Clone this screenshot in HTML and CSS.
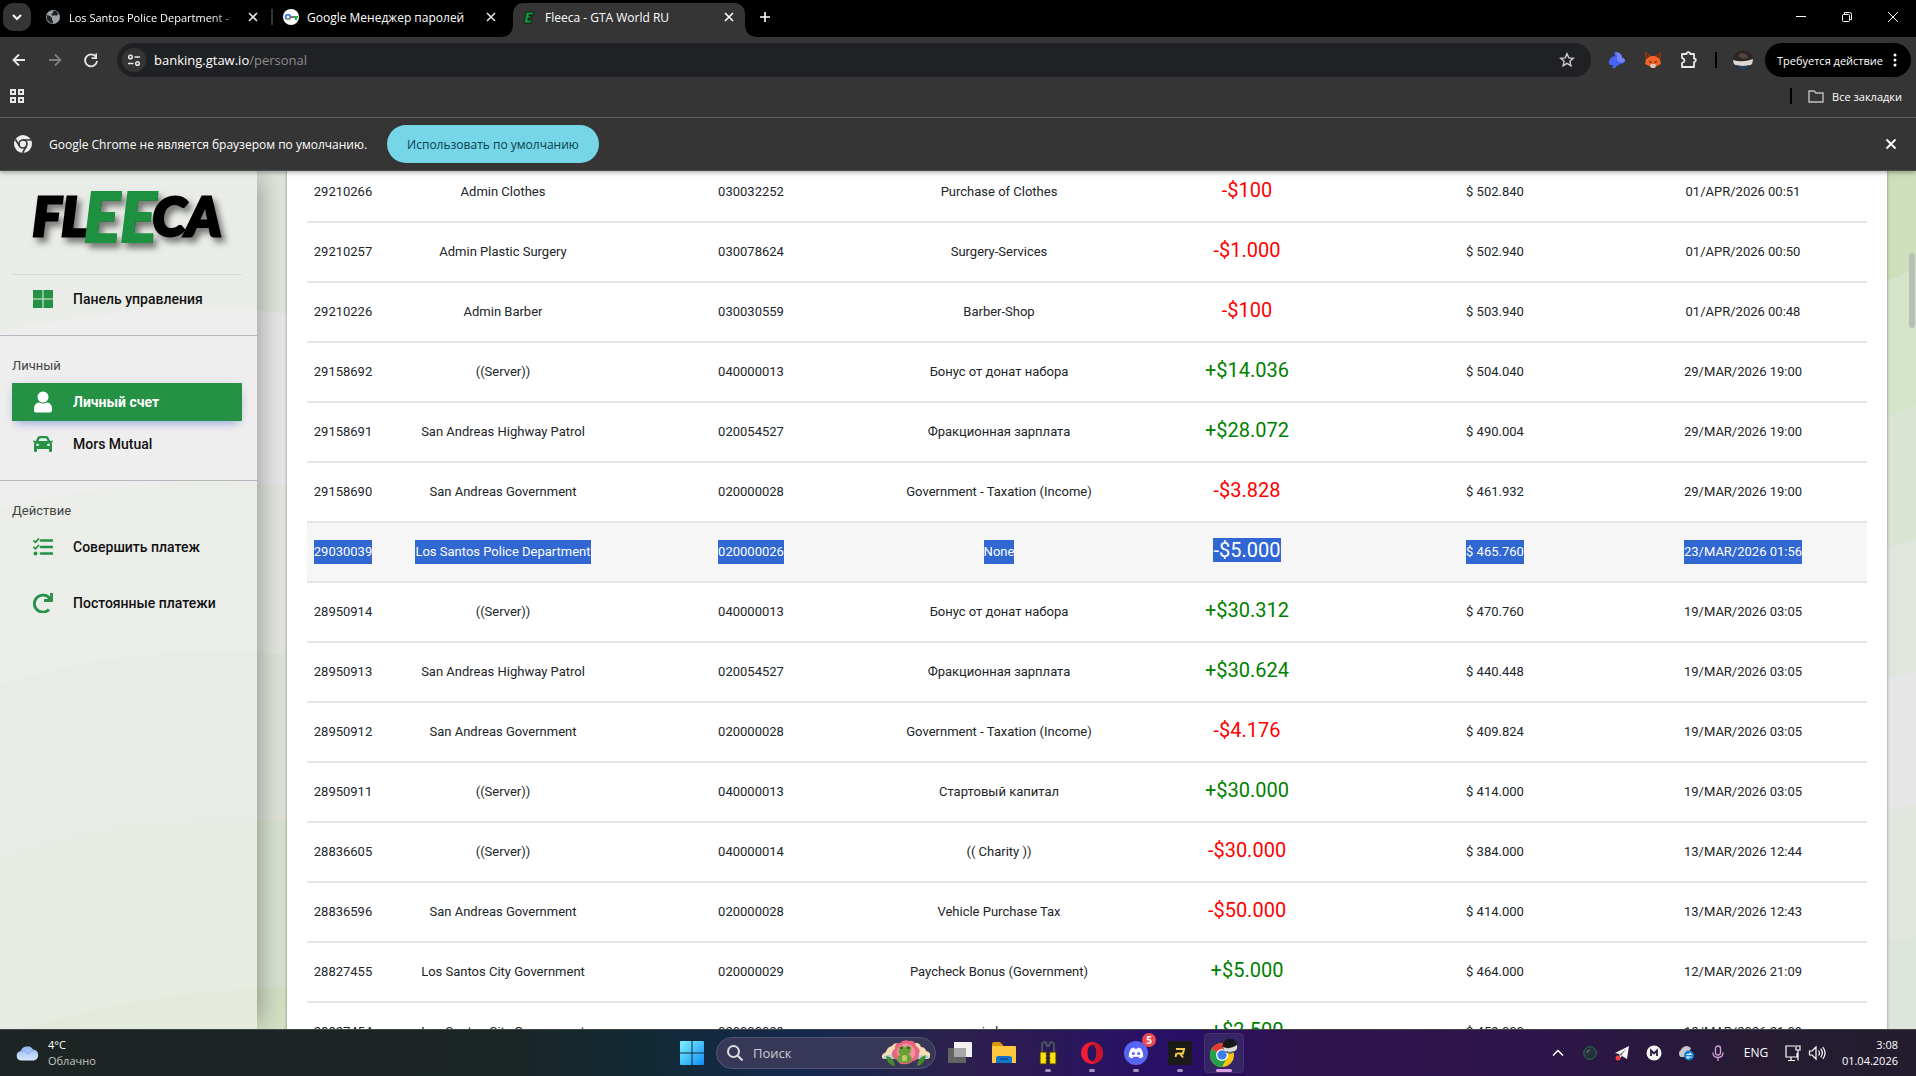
FILE: index.html
```html
<!DOCTYPE html>
<html lang="ru">
<head>
    <meta charset="UTF-8">
    <meta name="viewport" content="width=device-width, initial-scale=1.0">
    <title>Fleeca - GTA World RU</title>
    <link rel="stylesheet" href="styles.css">
</head>
<body>
    <header class="browser">
        <div class="tabstrip">
            <button class="tabsearch" aria-label="Поиск вкладок"><svg width="16" height="16" viewBox="0 0 16 16"><path d="M4 6l4 4 4-4" fill="none" stroke="#fff" stroke-width="2"/></svg></button>
            <div class="tab">
                <svg width="16" height="16" viewBox="0 0 16 16"><circle cx="8" cy="8" r="7" fill="#9aa0a6"/><path d="M2 6l3 1 2 2v2l1 1v2.500l-3-1-3-3zM8 2l3 0 2.500 3-2.500 2-1-1-2 1-2-2 2-1z" fill="#202124"/></svg>
                <span class="tabname fade">Los Santos Police Department -</span>
                <button class="close" aria-label="Закрыть"><svg width="16" height="16" viewBox="0 0 16 16"><path d="M4 4l8 8M12 4l-8 8" stroke="#e3e3e3" stroke-width="1.600"/></svg></button>
            </div>
            <i class="tabline"></i>
            <div class="tab">
                <svg width="16" height="16" viewBox="0 0 16 16"><circle cx="8" cy="8" r="8" fill="#fff"/><circle cx="5" cy="8" r="2.300" fill="none" stroke="#4285f4" stroke-width="2"/><path d="M8 7h3v2H8z" fill="#ea4335"/><path d="M10 7h5v2h-1v2h-2V9h-2z" fill="#34a853"/><path d="M3 10l2 1 2-1" stroke="#fbbc04" fill="none"/></svg>
                <span class="tabname">Google Менеджер паролей</span>
                <button class="close" aria-label="Закрыть"><svg width="16" height="16" viewBox="0 0 16 16"><path d="M4 4l8 8M12 4l-8 8" stroke="#e3e3e3" stroke-width="1.600"/></svg></button>
            </div>
            <i class="tabline hidden"></i>
            <div class="tab active">
                <svg width="16" height="16" viewBox="0 0 16 16"><path d="M5 3h8l-1 3H8v1h3l-1 2H7v2h4l-1 3H3z" fill="#1b9140" stroke="#06280f"/></svg>
                <span class="tabname">Fleeca - GTA World RU</span>
                <button class="close" aria-label="Закрыть"><svg width="16" height="16" viewBox="0 0 16 16"><path d="M4 4l8 8M12 4l-8 8" stroke="#fff" stroke-width="1.600"/></svg></button>
            </div>
            <button class="newtab" aria-label="Новая вкладка"><svg width="16" height="16" viewBox="0 0 16 16"><path d="M8 3v10M3 8h10" stroke="#fff" stroke-width="1.600"/></svg></button>
            <div class="winbuttons">
                <button aria-label="Свернуть"><svg width="12" height="12" viewBox="0 0 12 12"><path d="M1 5.500h10" stroke="#fff"/></svg></button>
                <button aria-label="Окно"><svg width="12" height="12" viewBox="0 0 12 12"><path d="M3.500 3V1.500h5q2 0 2 2v5H9" fill="none" stroke="#fff"/><rect x="1.500" y="3.500" width="7" height="7" rx="1" fill="none" stroke="#fff"/></svg></button>
                <button aria-label="Закрыть окно"><svg width="12" height="12" viewBox="0 0 12 12"><path d="M1 1l10 10M11 1L1 11" stroke="#fff"/></svg></button>
            </div>
        </div>
        <div class="toolbar">
            <button class="nav" aria-label="Назад"><svg width="18" height="18" viewBox="0 0 18 18"><path d="M15 9H4M9 3.500L3.500 9 9 14.500" fill="none" stroke="#e8e8e8" stroke-width="1.800"/></svg></button>
            <button class="nav" aria-label="Вперед"><svg width="18" height="18" viewBox="0 0 18 18"><path d="M3 9h11M9 3.500L14.500 9 9 14.500" fill="none" stroke="#7d7d7d" stroke-width="1.800"/></svg></button>
            <button class="nav" aria-label="Обновить"><svg width="18" height="18" viewBox="0 0 18 18"><path d="M14 6a6 6 0 1 0 1 4" fill="none" stroke="#e8e8e8" stroke-width="1.800"/><path d="M15 2.500V8H9.500V6.300h3.800V2.500z" fill="#e8e8e8"/></svg></button>
            <div class="address">
                <button class="siteinfo" aria-label="О сайте"><svg width="14" height="14" viewBox="0 0 14 14" fill="none" stroke="#e8e8e8" stroke-width="1.500"><circle cx="3.500" cy="4" r="1.800"/><path d="M7.500 4H13M1 10.500h5.500"/><circle cx="10.500" cy="10.500" r="1.800"/></svg></button>
                <a class="url" href="#">banking.gtaw.io<span>/personal</span></a>
                <button class="star" aria-label="Закладка"><svg width="16" height="16" viewBox="0 0 16 16"><path d="M8 1.800l1.800 4.100 4.500.4-3.400 3 1 4.400L8 11.400l-3.900 2.300 1-4.400-3.400-3 4.500-.4z" fill="none" stroke="#ccc" stroke-width="1.400"/></svg></button>
            </div>
            <div class="extensions">
                <button aria-label="Кошелек"><svg width="18" height="18" viewBox="0 0 18 18"><path d="M1 10q1-4 6-5 0-1-1-3Q7 0 11 2q3 2 3 5 3 0 3 3-1 3-5 3l-1 1q-2 0-4 3l-3 0q1-2 2-3-3 1-5-1z" fill="#4b63f5"/><path d="M8 1q6 1 6 6 3 0 3 3-2 2-5 1-4-1-3-6z" fill="#7387fb"/></svg></button>
                <button aria-label="MetaMask"><svg width="18" height="18" viewBox="0 0 18 18"><path d="M1 1l6 4h4l6-4-1 7 1 5-4 2-2 1H7l-2-1-4-2 1-5z" fill="#f0642a"/><path d="M1 1l6 4-5 3zM17 1l-6 4 5 3z" fill="#7d2a10"/><path d="M5 10l3 1-2 1zM13 10l-3 1 2 1z" fill="#331d12"/><path d="M6 14l1-1h4l1 1-1 3H7z" fill="#d8c5b8"/></svg></button>
                <button aria-label="Расширения"><svg width="18" height="18" viewBox="0 0 18 18"><path d="M2 3h4.500a1.800 1.800 0 0 1 3.600 0H14v4.500a1.800 1.800 0 0 1 0 3.600V16H2v-4q2.500-1 2.500-2.600T2 7z" fill="none" stroke="#e8e8e8" stroke-width="1.800" stroke-linejoin="round"/></svg></button>
            </div>
            <i class="sep"></i>
            <button class="avatar" aria-label="Профиль"><svg width="20" height="20" viewBox="0 0 20 20"><circle cx="10" cy="10" r="10" fill="#2d2524"/><path d="M0 10q10 3 20-1 0 4-2 6-8 2-16 0-2-2-2-5z" fill="#ded9d5"/><path d="M3 15q7 2 14 0-3 5-7 5t-7-5z" fill="#27405c"/><path d="M5 6l3-3 5 1 3 4-6 1z" fill="#54443e"/></svg></button>
            <button class="action">Требуется действие <svg width="4" height="14" viewBox="0 0 4 14" fill="#fff"><circle cx="2" cy="2" r="1.500"/><circle cx="2" cy="7" r="1.500"/><circle cx="2" cy="12" r="1.500"/></svg></button>
        </div>
        <div class="bookmarks">
            <button class="apps" aria-label="Приложения"><svg width="14" height="14" viewBox="0 0 14 14" fill="none" stroke="#e8e8e8" stroke-width="2"><path d="M1 1h4v4H1zM9 1h4v4H9zM1 9h4v4H1zM9 9h4v4H9z"/></svg></button>
            <i class="sep"></i>
            <button class="allmarks"><svg width="16" height="13" viewBox="0 0 16 13"><path d="M1 1h5l2 2h7v9H1z" fill="none" stroke="#c0c0c0" stroke-width="1.400"/></svg>Все закладки</button>
        </div>
        <div class="infobar">
            <svg width="18" height="18" viewBox="0 0 18 18"><circle cx="9" cy="9" r="9" fill="#eee"/><circle cx="9" cy="9" r="4" fill="#eee" stroke="#353535" stroke-width="1.600"/><path d="M9 5h8M5.500 11L1.500 4.500M12.500 11L8.500 18" stroke="#353535" stroke-width="1.600"/></svg>
            <p>Google Chrome не является браузером по умолчанию.</p>
            <button class="default">Использовать по умолчанию</button>
            <button class="close" aria-label="Закрыть"><svg width="16" height="16" viewBox="0 0 16 16"><path d="M3.500 3.500l9 9M12.500 3.500l-9 9" stroke="#fff" stroke-width="1.800"/></svg></button>
        </div>
    </header>

    <main class="page">
        <svg class="backdrop" viewBox="0 0 1916 858" preserveAspectRatio="none">
            <rect width="1916" height="858" fill="#dee4d8"/>
            <path d="M0 162Q100 137 200 137T400 165V858H0z" fill="#e6e6e6"/>
            <path d="M0 338Q110 310 210 311T400 335V858H0z" fill="#e1e5dd"/>
            <path d="M0 513Q100 482 200 481T400 497V858H0z" fill="#dce2d6"/>
            <path d="M0 688Q100 651 210 650H400V858H0z" fill="#d6e2cf"/>
            <path d="M20 858Q150 820 287 816H400V858z" fill="#d2dfc3"/>
            <path d="M1000 0H1916V858H1000z" fill="#cde0bb"/>
            <path d="M1887 110L1916 97V858H1860V122z" fill="#d4e4c8"/>
            <path d="M1887 246L1916 234V858H1860V257z" fill="#dae4d2"/>
            <path d="M1887 377L1916 368V858H1860V386z" fill="#e0e6dc"/>
            <path d="M1887 509L1916 500V858H1860V518z" fill="#e6e6e6"/>
            <path d="M1887 640L1916 633V858H1860V647z" fill="#e1e6df"/>
            <path d="M1887 772L1916 765V858H1860V779z" fill="#dde5da"/>
        </svg>
        <nav class="sidebar">
            <a class="logo" href="#"><span class="dark">FL</span><span class="green">EE</span><span class="dark">CA</span></a>
            <ul>
                <li><a href="#"><svg width="20" height="18" viewBox="0 0 20 18"><path d="M0 0h9.500v8.500H0zM10.500 0H20v8.500h-9.500zM0 9.500h9.500V18H0zM10.500 9.500H20V18h-9.500z" fill="#259145"/></svg>Панель управления</a></li>
            </ul>
            <h2>Личный</h2>
            <ul>
                <li class="current"><a href="#"><svg width="20" height="22" viewBox="0 0 20 22" fill="#fff"><circle cx="10" cy="6" r="5.500"/><path d="M1 18q0-6 5-6.500 4 2 8 0 5 .5 5 6.500v1.500q0 2-2 2H3q-2 0-2-2z"/></svg>Личный счет</a></li>
                <li><a href="#"><svg width="20" height="16" viewBox="0 0 20 16"><path fill="#259145" fill-rule="evenodd" d="M3 5l1.200-3Q5 0 7 0h6q2 0 2.800 2L17 5l2.500-.5q.7.500.3 1.200l-1.300.8q.5.700.5 1.500v7q0 1-1 1h-1q-1 0-1-1v-2H4v2q0 1-1 1H2q-1 0-1-1V8q0-.8.500-1.500L.2 5.700q-.4-.7.300-1.200zM5.500 5h9l-1-2.300q-.2-.5-.7-.5H7.200q-.5 0-.7.500zM4.500 7.500a1.500 1.300 0 1 0 .1 0zM15.500 7.500a1.500 1.300 0 1 0 .1 0z"/></svg>Mors Mutual</a></li>
            </ul>
            <h2>Действие</h2>
            <ul class="wide">
                <li><a href="#"><svg width="20" height="18" viewBox="0 0 20 18" fill="none" stroke="#259145"><path d="M8 2.500h11M8 9h11M8 15.500h11" stroke-width="2.600" stroke-linecap="round"/><path d="M.5 2.500L2.500 4.300 6 .5M.5 9l2 1.800L6 7" stroke-width="1.800"/><circle cx="2.500" cy="15.500" r="2" fill="#259145" stroke="none"/></svg>Совершить платеж</a></li>
                <li><a href="#"><svg width="20" height="20" viewBox="0 0 20 20"><path d="M16 16.500A8.500 8.500 0 1 1 17 6" fill="none" stroke="#259145" stroke-width="2.800"/><path d="M18.500 0v7.500H11" fill="none" stroke="#259145" stroke-width="2.800"/></svg>Постоянные платежи</a></li>
            </ul>
        </nav>
        <section class="card">
            <table>
                <tbody>
                    <tr><td class="id">29210266</td><td>Admin Clothes</td><td>030032252</td><td>Purchase of Clothes</td><td class="sum minus">-$100</td><td>$ 502.840</td><td>01/APR/2026 00:51</td></tr>
                    <tr><td>29210257</td><td>Admin Plastic Surgery</td><td>030078624</td><td>Surgery-Services</td><td class="sum minus">-$1.000</td><td>$ 502.940</td><td>01/APR/2026 00:50</td></tr>
                    <tr><td>29210226</td><td>Admin Barber</td><td>030030559</td><td>Barber-Shop</td><td class="sum minus">-$100</td><td>$ 503.940</td><td>01/APR/2026 00:48</td></tr>
                    <tr><td>29158692</td><td>((Server))</td><td>040000013</td><td>Бонус от донат набора</td><td class="sum plus">+$14.036</td><td>$ 504.040</td><td>29/MAR/2026 19:00</td></tr>
                    <tr><td>29158691</td><td>San Andreas Highway Patrol</td><td>020054527</td><td>Фракционная зарплата</td><td class="sum plus">+$28.072</td><td>$ 490.004</td><td>29/MAR/2026 19:00</td></tr>
                    <tr><td>29158690</td><td>San Andreas Government</td><td>020000028</td><td>Government - Taxation (Income)</td><td class="sum minus">-$3.828</td><td>$ 461.932</td><td>29/MAR/2026 19:00</td></tr>
                    <tr class="selected"><td><span>29030039</span></td><td><span>Los Santos Police Department</span></td><td><span>020000026</span></td><td><span>None</span></td><td class="sum minus"><span>-$5.000</span></td><td><span>$ 465.760</span></td><td><span>23/MAR/2026 01:56</span></td></tr>
                    <tr><td>28950914</td><td>((Server))</td><td>040000013</td><td>Бонус от донат набора</td><td class="sum plus">+$30.312</td><td>$ 470.760</td><td>19/MAR/2026 03:05</td></tr>
                    <tr><td>28950913</td><td>San Andreas Highway Patrol</td><td>020054527</td><td>Фракционная зарплата</td><td class="sum plus">+$30.624</td><td>$ 440.448</td><td>19/MAR/2026 03:05</td></tr>
                    <tr><td>28950912</td><td>San Andreas Government</td><td>020000028</td><td>Government - Taxation (Income)</td><td class="sum minus">-$4.176</td><td>$ 409.824</td><td>19/MAR/2026 03:05</td></tr>
                    <tr><td>28950911</td><td>((Server))</td><td>040000013</td><td>Стартовый капитал</td><td class="sum plus">+$30.000</td><td>$ 414.000</td><td>19/MAR/2026 03:05</td></tr>
                    <tr><td>28836605</td><td>((Server))</td><td>040000014</td><td>(( Charity ))</td><td class="sum minus">-$30.000</td><td>$ 384.000</td><td>13/MAR/2026 12:44</td></tr>
                    <tr><td>28836596</td><td>San Andreas Government</td><td>020000028</td><td>Vehicle Purchase Tax</td><td class="sum minus">-$50.000</td><td>$ 414.000</td><td>13/MAR/2026 12:43</td></tr>
                    <tr><td>28827455</td><td>Los Santos City Government</td><td>020000029</td><td>Paycheck Bonus (Government)</td><td class="sum plus">+$5.000</td><td>$ 464.000</td><td>12/MAR/2026 21:09</td></tr>
                    <tr><td>28827454</td><td>Los Santos City Government</td><td>020000029</td><td>in bus</td><td class="sum plus">+$2.500</td><td>$ 459.000</td><td>12/MAR/2026 21:09</td></tr>
                </tbody>
            </table>
        </section>
        <i class="scrollbar"></i>
    </main>

    <footer class="taskbar">
        <button class="weather">
            <svg width="24" height="16" viewBox="0 0 24 16"><defs><linearGradient id="cloud" x1="0" y1="0" x2="0" y2="1"><stop offset="0" stop-color="#8fb4f0"/><stop offset="1" stop-color="#d9e5fb"/></linearGradient></defs><path d="M5 15.500a4.700 4.700 0 0 1-.5-9.300A7 7 0 0 1 17 4.500a5.600 5.600 0 0 1 1 11z" fill="url(#cloud)"/><path d="M5 6q5-1 7 3 2-4 6-4" fill="none" stroke="#7fa5e8"/></svg>
            <span>4°C<br><em>Облачно</em></span>
        </button>
        <div class="dock">
            <button aria-label="Пуск"><svg width="24" height="24" viewBox="0 0 24 24"><defs><linearGradient id="win" x1="0" y1="0" x2="1" y2="1"><stop offset="0" stop-color="#7ff3fd"/><stop offset="1" stop-color="#0d8df5"/></linearGradient></defs><path d="M0 1q0-1 1-1h10.500v11.500H0zM12.500 0H23q1 0 1 1v10.500H12.500zM0 12.500h11.500V24H1q-1 0-1-1zM12.500 12.500H24V23q0 1-1 1H12.500z" fill="url(#win)"/></svg></button>
            <label class="search">
                <svg width="16" height="16" viewBox="0 0 16 16"><circle cx="6.500" cy="6.500" r="5.500" fill="none" stroke="#ddd" stroke-width="2"/><path d="M10.500 10.500l5 5" stroke="#ddd" stroke-width="2"/></svg>
                <input type="text" placeholder="Поиск" aria-label="Поиск">
                <svg width="50" height="26" viewBox="0 0 50 26"><path d="M1 18q-1-4 4-6 1-5 6-6 2-4 7-2l14 0q6-3 8 3 4 0 5 4 5 1 4 5 0 3-3 3H3z" fill="#f3ddb5"/><path d="M3 16q8-3 14 0 10-3 30 0v3H3z" fill="#a9d6d5"/><path d="M14 9q-1-6 5-6 4-4 9-2 6-1 7 5 5 3 3 8 0 6-6 7-4 4-8 3-6 1-8-4-5-2-5-6 0-4 3-5z" fill="#e8657f"/><path d="M17 8q8-9 16 0 3 6-1 10-7 6-13 0-5-5-2-10z" fill="#f58fa1"/><path d="M18 9q0-3 3-3 2 0 3 2 2-3 4-2 3 1 2 4 0 3-3 4 5 2 3 7-2 3-4 1-3 2-6 0-3 1-4-2 0-3 3-5-2-2-1-6z" fill="#6b9f35"/><path d="M21 16q3-2 5 0v5h-5z" fill="#b7cc63"/><circle cx="20.500" cy="8" r="1" fill="#263b12"/><circle cx="27.500" cy="8" r="1" fill="#263b12"/><path d="M5 16q8 1 9 10-8-1-9-10zM45 15q-8 2-9 11 8-2 9-11z" fill="#4b8a2c"/></svg>
            </label>
            <button aria-label="Рабочие столы"><svg width="24" height="24" viewBox="0 0 24 24"><path d="M6 1h17q1 0 1 1v14H6z" fill="#f2f2f2"/><path d="M0 7h18v15H1q-1 0-1-1z" fill="#636363"/><path d="M6 7h12v9H6z" fill="#a7a7a7"/></svg></button>
            <button aria-label="Проводник"><svg width="24" height="24" viewBox="0 0 24 24"><path d="M0 3q0-2 2-2h6l3 3v5H0z" fill="#d9960a"/><path d="M1 5h22q1 0 1 1v16H0V6z" fill="#fbc840"/><path d="M4 22v-5q0-2 2-2h11q3 0 3 2v5z" fill="#1276c8"/><path d="M8 18h8" stroke="#064f8f" stroke-width="1.500"/></svg></button>
            <button class="running" aria-label="Замки"><svg width="24" height="24" viewBox="0 0 24 24"><path d="M6 12V5q0-4 3-4 2 1 2 5M13 6q0-4 2-5 3 0 3 4v7" fill="none" stroke="#49525a" stroke-width="2"/><path d="M4 11h7l-1 2 1 2-1 2 1 2-1 2 1 2H4zM20 11h-7l1 2-1 2 1 2-1 2 1 2-1 2h7z" fill="#ffe00f" stroke="#403600"/></svg></button>
            <button class="running" aria-label="Opera"><svg width="24" height="24" viewBox="0 0 24 24"><path d="M12 1a11 11 0 1 0 .1 0zM12 3.500q4.500 1 4.500 8.500T12 20.500Q7.500 19.500 7.500 12T12 3.500z" fill="#f31c31" fill-rule="evenodd"/><path d="M12 3.500Q15 .5 19 3.600a11 11 0 0 1 0 16.800Q15 23.500 12 20.500q4.500-1 4.500-8.500T12 3.500z" fill="#c4172b"/></svg></button>
            <button class="running discord" aria-label="Discord"><svg width="24" height="24" viewBox="0 0 24 24"><circle cx="12" cy="12" r="12" fill="#5865f2"/><path d="M7 7.500l3-1 .7 1.200h2.600l.7-1.200 3 1q2.500 4 2.200 8.500l-3.500 1.600-1-1.800H9.300l-1 1.800L4.800 16Q4.500 11.500 7 7.500z" fill="#fff"/><circle cx="9.400" cy="12.500" r="1.500" fill="#5865f2"/><circle cx="14.600" cy="12.500" r="1.500" fill="#5865f2"/></svg><b>5</b></button>
            <button class="running" aria-label="RAGE"><svg width="24" height="24" viewBox="0 0 24 24"><path d="M0 0h24v24H0z" fill="#1a1a19"/><path d="M8 8h8l-1 4.500H9M12 12.500l3 4M8.500 12l-1 4" fill="none" stroke="#f6c64f" stroke-width="2"/></svg></button>
            <button class="running front" aria-label="Chrome"><svg width="28" height="28" viewBox="0 0 28 28"><circle cx="12" cy="16" r="12" fill="#fbc417"/><path d="M12 16L1.600 10a12 12 0 0 1 20.800 0H12z" fill="#e33b2e"/><path d="M1.600 10A12 12 0 0 0 12 28l5-9-5-3z" fill="#25a04a"/><circle cx="12" cy="16" r="6" fill="#fff"/><circle cx="12" cy="16" r="4.700" fill="#3b7ded"/><circle cx="20" cy="7" r="7.500" fill="#17191c"/><path d="M13 8q7 3 14-2 1 4-2 6-7 2-11 0z" fill="#dadada"/><path d="M16 12q5 2 9 0-2 3-5 2.500t-4-2.500z" fill="#5a7485"/></svg></button>
        </div>
        <div class="tray">
            <button aria-label="Скрытые значки"><svg width="12" height="12" viewBox="0 0 12 12"><path d="M1 8.500l5-5 5 5" fill="none" stroke="#fff" stroke-width="1.500"/></svg></button>
            <button aria-label="Статус"><svg width="14" height="14" viewBox="0 0 14 14"><circle cx="7" cy="7" r="6.300" fill="#26303b" stroke="#1e7a4d"/><path d="M4 7q0-3 3-3" fill="none" stroke="#75808a"/></svg></button>
            <button aria-label="Telegram"><svg width="16" height="16" viewBox="0 0 16 16"><path d="M1 8L15 1l-2 13-5-3-2 2-1-4z" fill="#f6f6f6"/><path d="M5 10l7-6-5 7z" fill="#80758e"/><circle cx="4" cy="13" r="2.500" fill="#f0413b"/></svg></button>
            <button aria-label="M"><svg width="16" height="16" viewBox="0 0 16 16"><circle cx="8" cy="8" r="7.500" fill="#f5f5f5"/><path d="M5 11V5.500l3 3 3-3V11" fill="none" stroke="#2b1b40" stroke-width="1.800"/></svg></button>
            <button aria-label="OneDrive"><svg width="18" height="16" viewBox="0 0 18 16"><path d="M4 12a4 4 0 0 1 0-7 6 6 0 0 1 10-2l-4 9z" fill="#c9c6cc"/><circle cx="12" cy="10.500" r="5" fill="#1180dc"/><path d="M9.500 9.500h4.500l-1.500-1.500M14.500 12H10l1.500 1.500" fill="none" stroke="#fff" stroke-width="1.200"/></svg></button>
            <button aria-label="Микрофон"><svg width="14" height="16" viewBox="0 0 14 16"><rect x="4.500" y="1" width="5" height="9" rx="2.500" fill="none" stroke="#d3a0da" stroke-width="1.300"/><path d="M2 7.500q0 5 5 5t5-5M7 12.500V16" fill="none" stroke="#d3a0da" stroke-width="1.300"/></svg></button>
            <button class="lang">ENG</button>
            <button class="sound" aria-label="Сеть и звук">
                <svg width="18" height="18" viewBox="0 0 18 18" fill="none" stroke="#fff" stroke-width="1.200"><path d="M11 2H2v11h11V9M7 13v3M4 16.500h7M12 2h4v4h-4zM14 6v10.500"/></svg>
                <svg width="18" height="16" viewBox="0 0 18 16" fill="none" stroke="#fff" stroke-width="1.200"><path d="M1.500 6h2.500l4-4v12l-4-4H1.500zM10.500 5.500q2 2.500 0 5M12.700 3.700q3.300 4.300 0 8.600M14.800 2q4.600 6 0 12"/></svg>
            </button>
            <time>3:08<br>01.04.2026</time>
        </div>
    </footer>
</body>
</html>
```
FILE: styles.css
```css
*{
    box-sizing: border-box;
}
body{
    margin: 0;
    height: 100vh;
    display: flex;
    flex-direction: column;
    overflow: hidden;
    font-family: "Roboto", sans-serif;
    color: #212529;
}
button{
    border: 0;
    padding: 0;
    background: transparent;
    font: inherit;
    color: inherit;
    display: flex;
    align-items: center;
    justify-content: center;
}
a{
    color: inherit;
    text-decoration: none;
}
svg{
    display: block;
    flex-shrink: 0;
}

/* browser */
.browser{
    position: relative;
    z-index: 2;
    background: #353535;
    color: #fff;
    font-family: "Open Sans", sans-serif;
    font-size: 12px;
    border-bottom: 1px solid #47504c;
    box-shadow: 0 1px 5px rgba(0,0,0,0.4);
}
.tabstrip{
    display: flex;
    height: 37px;
    padding: 3px 0 0 3px;
    background: #000;
}
.tabsearch{
    width: 28px;
    height: 28px;
    margin-right: 6px;
    border-radius: 10px;
    background: #353535;
}
.tab{
    display: flex;
    align-items: center;
    gap: 8px;
    width: 232px;
    padding: 0 8px 6px;
}
.tab.active{
    position: relative;
    height: 34px;
    border-radius: 10px 10px 0 0;
    background: #353535;
}
.tab.active::before,.tab.active::after{
    content: "";
    position: absolute;
    bottom: 0;
    width: 10px;
    height: 10px;
}
.tab.active::before{
    left: -10px;
    background: radial-gradient(circle at 0 0, #000 9px, #353535 10px);
}
.tab.active::after{
    right: -10px;
    background: radial-gradient(circle at 100% 0, #000 9px, #353535 10px);
}
.tabname{
    flex: 1;
    white-space: nowrap;
}
.tab .close{
    flex-shrink: 0;
}
.fade{
    min-width: 0;
    margin-right: -6px;
    font-size: 11px;
    -webkit-mask-image: linear-gradient(90deg, #000 80%, transparent 105%);
    mask-image: linear-gradient(90deg, #000 80%, transparent 105%);
}
.tabline{
    width: 2px;
    height: 16px;
    margin: 6px 2px;
    background: #353535;
}
.hidden{
    visibility: hidden;
}
.newtab{
    width: 28px;
    height: 28px;
    margin-left: 6px;
}
.winbuttons{
    display: flex;
    height: 28px;
    margin-left: auto;
}
.winbuttons button{
    width: 46px;
}
.toolbar{
    display: flex;
    align-items: center;
    height: 46px;
    padding: 0 5px 0 1px;
}
.nav{
    width: 36px;
    height: 34px;
}
.address{
    flex: 1;
    display: flex;
    align-items: center;
    gap: 8px;
    height: 34px;
    margin-left: 8px;
    padding: 0 16px 0 5px;
    border-radius: 17px;
    background: #202124;
}
.siteinfo{
    width: 24px;
    height: 24px;
    border-radius: 50%;
    background: #353535;
}
.url{
    flex: 1;
    font-size: 13px;
}
.url span{
    color: #8d8d8d;
}
.extensions{
    display: flex;
    margin: 0 8px;
}
.extensions button{
    width: 36px;
}
.sep{
    width: 2px;
    height: 16px;
    background: #000;
}
.avatar{
    margin: 0 12px 0 16px;
}
.action{
    gap: 10px;
    height: 34px;
    padding: 0 14px 0 12px;
    border-radius: 17px;
    background: #000;
    font-size: 11px;
}
.bookmarks{
    display: flex;
    align-items: center;
    height: 34px;
    padding: 0 14px 8px 10px;
}
.apps{
    margin-right: auto;
}
.allmarks{
    gap: 8px;
    margin-left: 16px;
    font-size: 11px;
}
.infobar{
    display: flex;
    align-items: center;
    height: 53px;
    padding: 0 17px 0 14px;
    border-top: 1px solid #5e5e5e;
}
.infobar p{
    margin: 0 20px 0 17px;
}
.default{
    height: 38px;
    padding: 0 20px;
    border-radius: 19px;
    background: #76d5e6;
    color: #04424e;
}
.infobar .close{
    margin-left: auto;
}

/* bank page */
.page{
    position: relative;
    flex: 1;
    min-height: 0;
    display: flex;
    overflow: hidden;
}
.backdrop{
    position: absolute;
    inset: 0;
    width: 100%;
    height: 100%;
}
.sidebar{
    position: relative;
    width: 257px;
    flex-shrink: 0;
    background: rgba(246,246,246,0.5);
    box-shadow: 8px 0 24px -6px rgba(0,0,0,0.35);
}
.logo{
    display: flex;
    align-items: center;
    justify-content: center;
    height: 104px;
    margin: 0 15px 5px 12px;
    padding-bottom: 14px;
    border-bottom: 1px solid #d9dbd6;
    font: italic 900 54px/70px "Lato", sans-serif;
}
.logo span{
    filter: drop-shadow(4px 5px 3px rgba(0,0,0,0.5));
}
.dark{
    color: #000;
    -webkit-text-stroke: 3px #000;
}
.green{
    position: relative;
    z-index: 1;
    margin: 0 -4px;
    font-size: 68px;
    color: #1e9140;
    -webkit-text-stroke: 2px #1e9140;
    text-shadow: 1px 1px 0 #0b4f20;
}
.sidebar ul{
    list-style: none;
    margin: 0;
    padding: 0 15px 17px 12px;
    border-bottom: 1px solid #b6baba;
}
.sidebar ul:last-child{
    border: 0;
}
.sidebar li{
    margin-bottom: 4px;
}
.sidebar li:last-child{
    margin-bottom: 0;
}
.sidebar .wide li{
    margin-bottom: 18px;
}
.sidebar li a{
    display: flex;
    align-items: center;
    gap: 20px;
    height: 38px;
    padding-left: 21px;
    font-size: 14px;
    font-weight: 500;
    color: #111;
}
.sidebar .current a{
    background: #259145;
    color: #fff;
    font-weight: 700;
    box-shadow: 0 6px 10px -4px rgba(70,110,220,0.5), 0 0 12px rgba(0,0,0,0.06);
}
.sidebar h2{
    margin: 0;
    padding: 20px 12px 7px;
    font-size: 13px;
    line-height: 20px;
    font-weight: 400;
    color: #444;
}
.card{
    position: relative;
    flex: 1;
    align-self: flex-start;
    margin: -8px 29px 0 30px;
    padding: 0 20px;
    background: #fff;
    box-shadow: 0 0 3px rgba(0,0,0,0.4);
}
table{
    width: 100%;
    table-layout: fixed;
    border-spacing: 0;
}
td{
    height: 60px;
    padding: 0;
    text-align: center;
    vertical-align: middle;
    font-size: 13px;
    line-height: 24px;
    border-bottom: 2px solid #e3e4e5;
}
.id{
    width: 72px;
}
.sum{
    padding-bottom: 4px;
    font-size: 20px;
}
.minus{
    color: #f00;
}
.plus{
    color: #008000;
}
.selected{
    background: #f6f6f6;
}
.selected span{
    display: inline-block;
    background: #3067d3;
    color: #fff;
}
.scrollbar{
    position: absolute;
    top: 82px;
    right: 1px;
    width: 6px;
    height: 75px;
    border-radius: 3px;
    background: #b9beb6;
}

/* windows taskbar */
.taskbar{
    position: relative;
    display: grid;
    grid-template-columns: 1fr auto 1fr;
    align-items: center;
    height: 47px;
    border-top: 1px solid #3c4645;
    background: linear-gradient(90deg, #1d2423 0%, #1b2524 26%, #122a33 33%, #14294e 42%, #2c204c 50%, #280f68 61%, #30124e 68%, #2d154a 80%, #251c32 92%, #231c2e 100%);
    color: #fff;
    font-family: "Open Sans", sans-serif;
    font-size: 12px;
    line-height: 16px;
}
.weather{
    justify-self: start;
    gap: 8px;
    margin-left: 16px;
    text-align: left;
    font-size: 11px;
}
.weather em{
    font-style: normal;
    color: #c3c5c5;
}
.dock{
    display: flex;
    gap: 4px;
}
.dock button{
    position: relative;
    width: 40px;
    height: 40px;
    border-radius: 4px;
}
.running::after{
    content: "";
    position: absolute;
    bottom: 1px;
    left: 17px;
    width: 6px;
    height: 3px;
    border-radius: 2px;
    background: #a394b9;
}
.dock .front{
    border: 1px solid #45326e;
    background: #362566;
}
.front::after{
    bottom: 0;
    left: 11px;
    width: 16px;
    background: #dda0e4;
}
.discord b{
    position: absolute;
    top: 0;
    right: 0;
    width: 14px;
    height: 14px;
    border-radius: 50%;
    background: #ec4a50;
    font-size: 10px;
    line-height: 14px;
}
.search{
    display: flex;
    align-items: center;
    gap: 8px;
    width: 220px;
    height: 32px;
    margin-top: 4px;
    padding: 0 4px 0 10px;
    border: 1px solid #535476;
    border-radius: 16px;
    background: #373858;
}
.search input{
    flex: 1;
    min-width: 0;
    border: 0;
    background: transparent;
    color: #ddd;
    font: 13px "Open Sans", sans-serif;
}
.search input::placeholder{
    color: #ccc;
}
.tray{
    display: flex;
    align-items: center;
    justify-content: flex-end;
    padding-right: 18px;
}
.tray button{
    width: 32px;
    height: 32px;
}
.tray .lang{
    width: 44px;
}
.tray .sound{
    gap: 6px;
    width: 54px;
}
.tray time{
    width: 66px;
    text-align: right;
    font-size: 11px;
}
```
